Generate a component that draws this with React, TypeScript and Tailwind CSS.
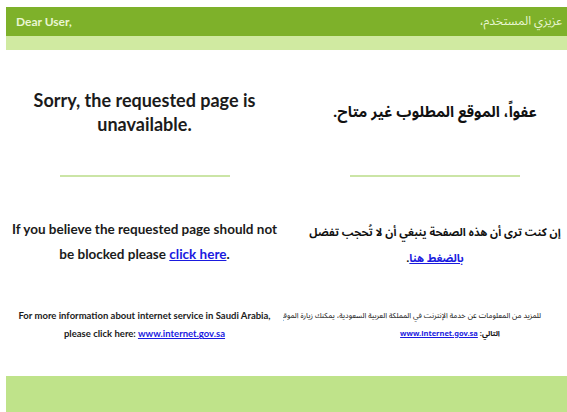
import type { ReactNode } from "react";

const latin = "font-['Lato',sans-serif]";
const arabic = "font-['Noto_Sans_Arabic','DejaVu_Sans',sans-serif]";

function Divider() {
  return <div className="mx-auto h-[2px] w-[170px] bg-[#cbe5a6]" />;
}

function Link({ children }: { children: ReactNode }) {
  return <a href="#" className="text-[#1a1adf] underline">{children}</a>;
}

// one bilingual row: english cell left, arabic cell right
function Row({ className, en, ar, clip }: { className?: string; en: ReactNode; ar: ReactNode; clip?: boolean }) {
  return (
    <div className={`grid w-[581px] grid-cols-[277px_304px] ${className ?? ""}`}>
      <div className={`${latin} whitespace-nowrap text-center font-bold text-[#1b1b1b]`}>{en}</div>
      <div
        dir="rtl"
        className={`${arabic} whitespace-nowrap text-center font-bold text-[#111] ${clip ? "overflow-hidden" : ""}`}
      >
        {ar}
      </div>
    </div>
  );
}

export default function App() {
  return (
    <div className="h-[412px] w-[567px] overflow-hidden bg-white pl-[6px] pt-[7px]">
      <div className="flex h-[29px] w-[600px] items-center justify-between bg-[#7eb12a] px-[10px] text-[12px] font-bold text-[#e9f6d2]">
        <span className={latin}>Dear User,</span>
        <span dir="rtl" className={`${arabic} mr-[34px] font-normal`}>عزيزي المستخدم،</span>
      </div>
      <div className="h-[14px] w-[600px] bg-[#d0eaa1]" />

      <Row
        className="mt-[38px] h-[48px] items-center"
        en={
          <h1 className="text-[18px] leading-[24px]">
            Sorry, the requested page is
            <br />
            unavailable.
          </h1>
        }
        ar={<h1 className="text-[15px] leading-[26px]">عفواً، الموقع المطلوب غير متاح.</h1>}
      />

      <Row className="mt-[39px]" en={<Divider />} ar={<Divider />} />

      <Row
        className="mt-[40px] h-[55px]"
        en={
          <p className="text-[13.5px] leading-[25px]">
            If you believe the requested page should not
            <br />
            be blocked please <Link>click here</Link>.
          </p>
        }
        ar={
          <p className="pt-[3px] text-[11px] leading-[26px]">
            إن كنت ترى أن هذه الصفحة ينبغي أن لا تُحجب تفضل
            <br />
            <Link>بالضغط هنا</Link>.
          </p>
        }
      />

      <Row
        className="mt-[35px]"
        clip
        en={
          <p className="text-[9.5px] leading-[18px]">
            For more information about internet service in Saudi Arabia,
            <br />
            please click here: <Link>www.internet.gov.sa</Link>
          </p>
        }
        ar={
          <div className="mr-[46px] text-[7.5px] leading-[18px]">
            <p className="text-right font-normal">
              للمزيد من المعلومات عن خدمة الإنترنت في المملكة العربية السعودية، يمكنك زيارة الموقع
            </p>
            <p className="ml-[76px] text-center">
              التالي: <Link>www.internet.gov.sa</Link>
            </p>
          </div>
        }
      />

      <div className="mt-[33px] h-[36px] w-[600px] bg-[#bfe38a]" />
    </div>
  );
}
